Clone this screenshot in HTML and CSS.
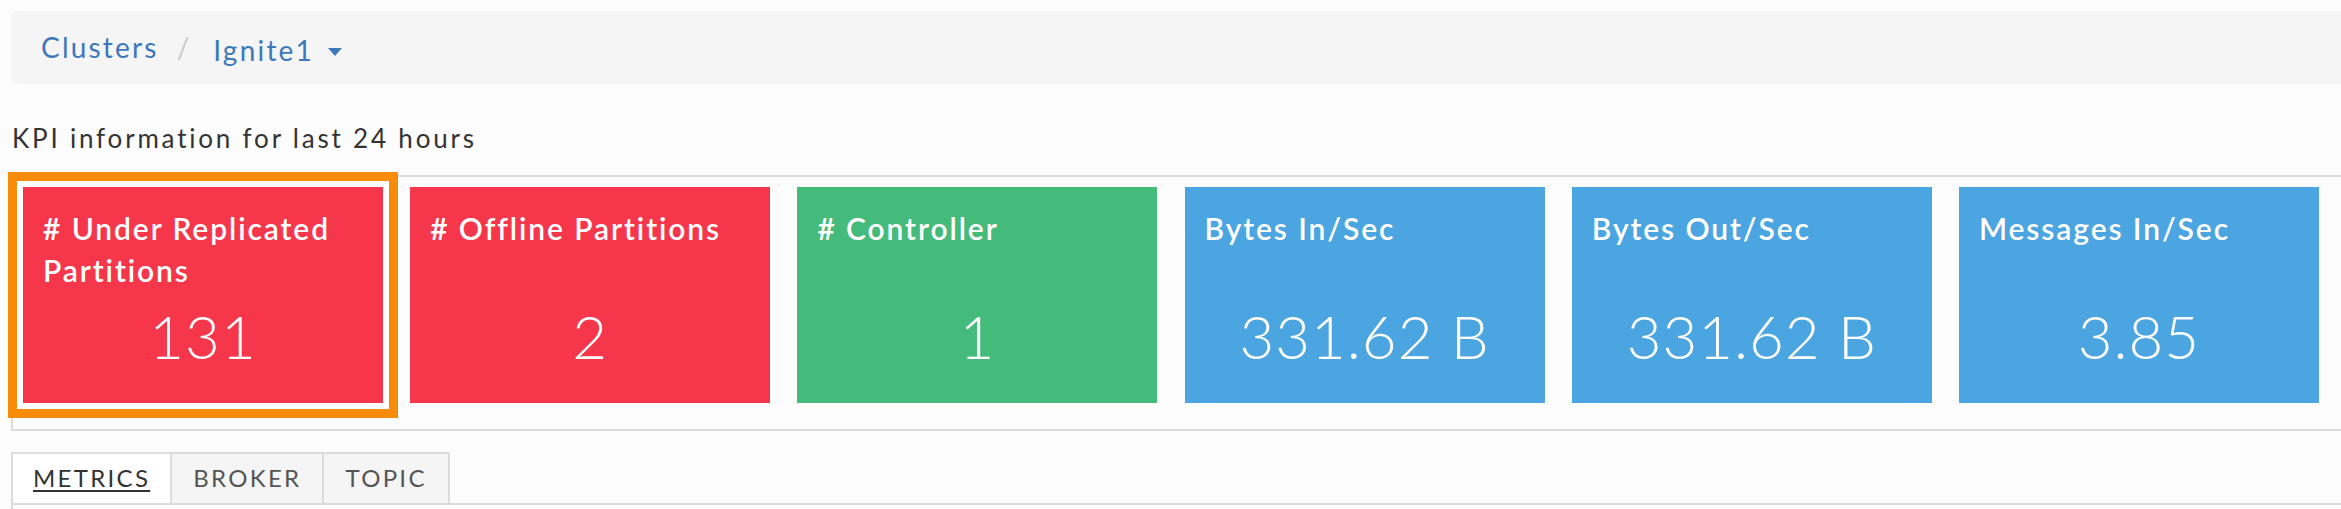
FILE: index.html
```html
<!DOCTYPE html>
<html lang="en">
<head>
<meta charset="utf-8">
<title>Cluster KPI</title>
<link rel="stylesheet" href="styles.css">
</head>
<body>
<div class="page">
  <nav class="crumbs">
    <a class="crumb">Clusters</a>
    <span class="sep">/</span>
    <a class="crumb crumb-drop">Ignite1<span class="caret"></span></a>
  </nav>

  <p class="kpi-label">KPI information for last 24 hours</p>

  <section class="kpi-panel">
    <div class="kpi-grid">
      <div class="kpi kpi-red kpi-highlight">
        <div class="kpi-title"># Under Replicated Partitions</div>
        <div class="kpi-value">131</div>
      </div>
      <div class="kpi kpi-red">
        <div class="kpi-title"># Offline Partitions</div>
        <div class="kpi-value">2</div>
      </div>
      <div class="kpi kpi-green">
        <div class="kpi-title"># Controller</div>
        <div class="kpi-value">1</div>
      </div>
      <div class="kpi kpi-blue">
        <div class="kpi-title">Bytes In/Sec</div>
        <div class="kpi-value">331.62 B</div>
      </div>
      <div class="kpi kpi-blue">
        <div class="kpi-title">Bytes Out/Sec</div>
        <div class="kpi-value">331.62 B</div>
      </div>
      <div class="kpi kpi-blue">
        <div class="kpi-title">Messages In/Sec</div>
        <div class="kpi-value">3.85</div>
      </div>
    </div>
  </section>

  <ul class="tabs">
    <li class="tab tab-active"><span class="tab-text">METRICS</span></li>
    <li class="tab"><span class="tab-text">BROKER</span></li>
    <li class="tab"><span class="tab-text">TOPIC</span></li>
  </ul>
  <div class="tab-content"></div>
</div>
</body>
</html>
```

FILE: styles.css
```css
html, body {
  margin: 0;
  padding: 0;
  background: #fcfcfc;
  overflow: hidden;
}

body {
  width: 2341px;
  height: 509px;
  font-family: Lato, "Open Sans", sans-serif;
  color: #333;
}

.page {
  width: 2380px;
  padding: 11px 0 0 11px;
  box-sizing: border-box;
}

/* breadcrumb */
.crumbs {
  display: flex;
  align-items: flex-start;
  height: 73px;
  box-sizing: border-box;
  padding: 16px 30px;
  background: #f5f5f5;
  border-radius: 6px;
  font-size: 28px;
  line-height: 40px;
}

.crumb {
  color: #3d78bb;
  text-decoration: none;
  letter-spacing: 2.2px;
}

.sep {
  color: #ccc;
  padding: 0 24px 0 18px;
}

.crumb-drop {
  display: inline-flex;
  align-items: center;
  padding-top: 3px;
}

.caret {
  width: 0;
  height: 0;
  margin-left: 14px;
  margin-top: 4px;
  border-top: 8px solid #3d78bb;
  border-left: 7px solid transparent;
  border-right: 7px solid transparent;
}

/* KPI label */
.kpi-label {
  margin: 36px 0 18px 1px;
  font-size: 26px;
  line-height: 37px;
  letter-spacing: 2.8px;
  color: #333;
}

/* KPI panel */
.kpi-panel {
  border: 2px solid #dcdcdc;
  border-right: none;
  padding: 10px 0 26px 10px;
}

.kpi-grid {
  display: grid;
  grid-template-columns: repeat(6, 360px);
  column-gap: 27.2px;
}

.kpi {
  display: flex;
  flex-direction: column;
  height: 216px;
  box-sizing: border-box;
  padding: 20px 20px 37px;
  color: #fff;
}

.kpi-red { background: #f5364b; }
.kpi-green { background: #45bb7b; }
.kpi-blue { background: #4ba5e0; }

.kpi-highlight {
  box-shadow: 0 0 0 6px #fff, 0 0 0 15px #f78c0b;
}

.kpi-title {
  font-size: 30px;
  font-weight: 600;
  line-height: 42px;
  letter-spacing: 1.9px;
}

.kpi-value {
  margin-top: auto;
  text-align: center;
  font-size: 60px;
  font-weight: 300;
  line-height: 60px;
  letter-spacing: 1px;
}

/* tabs */
.tabs {
  display: flex;
  margin: 21px 0 0;
  padding: 0;
  list-style: none;
}

.tab {
  height: 51px;
  box-sizing: border-box;
  padding: 7px 21px 0;
  border: 2px solid #dcdcdc;
  border-bottom: none;
  background: #f5f5f5;
  font-size: 24px;
  line-height: 33px;
  letter-spacing: 2.3px;
  color: #555;
}

.tab + .tab {
  margin-left: -2px;
}

.tab-active {
  padding: 7px 20px 0;
  background: #fff;
  color: #333;
}

.tab-active .tab-text {
  text-decoration: underline;
  text-decoration-thickness: 2px;
  text-underline-offset: 3px;
}

.tab-content {
  height: 4px;
  border-top: 2px solid #dcdcdc;
  border-left: 2px solid #dcdcdc;
  background: #fcfcfc;
}
```
